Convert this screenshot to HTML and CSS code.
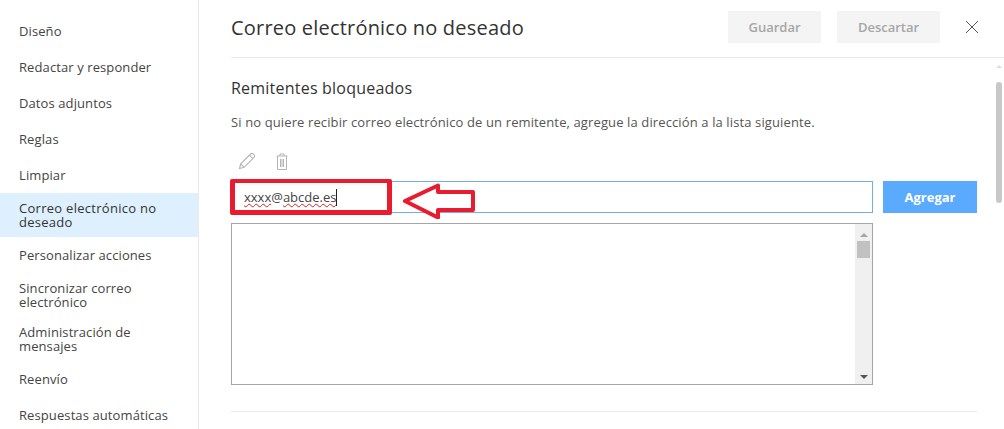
FILE: index.html
```html
<!DOCTYPE html>
<html lang="es">
<head>
<meta charset="utf-8">
<title>Correo electrónico no deseado</title>
<link rel="stylesheet" href="styles.css">
</head>
<body>
<div class="app">
  <nav class="side">
    <a class="item">Diseño</a>
    <a class="item">Redactar y responder</a>
    <a class="item">Datos adjuntos</a>
    <a class="item">Reglas</a>
    <a class="item">Limpiar</a>
    <a class="item two active">Correo electrónico no deseado</a>
    <a class="item">Personalizar acciones</a>
    <a class="item two">Sincronizar correo electrónico</a>
    <a class="item two">Administración de mensajes</a>
    <a class="item">Reenvío</a>
    <a class="item">Respuestas automáticas</a>
  </nav>
  <main class="main">
    <header class="head">
      <h1 class="title">Correo electrónico no deseado</h1>
      <button class="btn save">Guardar</button>
      <button class="btn discard">Descartar</button>
      <svg class="close" width="14" height="14" viewBox="0 0 14 14"><path d="M1 1l12 12M13 1L1 13" stroke="#555" stroke-width="1" fill="none"/></svg>
    </header>
    <div class="body">
      <div class="content">
        <h2 class="sub">Remitentes bloqueados</h2>
        <p class="desc">Si no quiere recibir correo electrónico de un remitente, agregue la dirección a la lista siguiente.</p>
        <div class="tools">
          <svg width="18" height="18" viewBox="0 0 18 18"><path d="M1.500 16.500l1.200-4.600L12.600 2c.8-.8 1.900-.8 2.600-.1l.9.9c.7.7.7 1.800-.1 2.600L6.100 15.300zM2.700 11.900l3.400 3.400M11.400 3.200l3.400 3.400" stroke="#b4b4b4" stroke-width="1.100" fill="none"/></svg>
          <svg width="12" height="17" viewBox="0 0 12 17"><path d="M.5 3h11M4 3V1h4v2M1.500 3v13.500h9V3M4.500 6v8M6 6v8M7.500 6v8" stroke="#b4b4b4" stroke-width="1" fill="none"/></svg>
        </div>
        <div class="add-row">
          <div class="input"><span class="typed"><span class="sp">xxxx</span>@<span class="sp">abcde.es</span></span><span class="caret"></span></div>
          <button class="add">Agregar</button>
        </div>
        <div class="list">
          <div class="list-bar">
            <span class="tri up"></span>
            <span class="thumb"></span>
            <span class="tri down"></span>
          </div>
        </div>
        <div class="rule"></div>
      </div>
      <div class="page-bar"><span class="page-up"></span><span class="page-thumb"></span></div>
    </div>
  </main>
</div>
<div class="mark"></div>
<svg class="arrow" width="74" height="36" viewBox="0 0 74 36"><path d="M3 18L36 2.500v6.500h35v18H36v7.500z" fill="#fff" stroke="#e81c2e" stroke-width="4" stroke-linejoin="round"/></svg>
</body>
</html>
```
FILE: styles.css
```css
html, body { margin: 0; height: 100%; overflow: hidden; background: #fff; }
body { font-family: "Open Sans", "Noto Sans", sans-serif; color: #333; position: relative; }
.app { display: flex; height: 429px; }
.side { width: 198px; flex: none; border-right: 1px solid #eaeaea; padding-top: 13px; box-sizing: content-box; }
.item { display: flex; align-items: center; height: 36px; padding: 0 20px 0 19px; font-size: 13px; line-height: 14px; color: #444; letter-spacing: .1px; }
.item.two { height: 44px; }
.item.active { background: #def0fd; color: #333; letter-spacing: .28px; }
.main { flex: 1; min-width: 0; display: flex; flex-direction: column; }
.head { height: 57px; margin-left: 32px; border-bottom: 1px solid #eaeaea; display: flex; align-items: center; flex: none; }
.title { margin: 0 auto 3px 0; font-size: 20px; font-weight: 400; color: #333; letter-spacing: .2px; }
.btn { height: 32px; border: 0; background: #f4f4f4; color: #a6a6a6; font: 600 13px "Open Sans", sans-serif; margin-bottom: 4px; padding: 0; }
.save { width: 93px; margin-right: 16px; }
.discard { width: 103px; margin-right: 25px; }
.close { margin-right: 25px; margin-bottom: 4px; }
.body { flex: 1; display: flex; min-height: 0; }
.content { width: 746px; margin-left: 32px; }
.sub { margin: 19px 0 0; font-size: 16px; line-height: 22px; font-weight: 500; color: #333; letter-spacing: .22px; }
.desc { margin: 14px 0 0; font-size: 13px; line-height: 18px; color: #555; letter-spacing: .12px; }
.tools { display: flex; gap: 20px; align-items: center; padding-left: 7px; margin-top: 20px; height: 20px; }
.add-row { display: flex; margin-top: 10px; gap: 10px; }
.input { width: 628px; height: 30px; border: 1px solid #71afe5; display: flex; align-items: center; padding-left: 12px; box-sizing: content-box; font-size: 13px; color: #444; }
.sp { text-decoration: underline wavy #d82020 1px; text-underline-offset: 1px; }
.caret { width: 1px; height: 17px; background: #222; }
.add { width: 94px; height: 32px; border: 0; background: #5aabff; color: #fff; font: 700 13px "Open Sans", sans-serif; padding: 0; }
.list { width: 640px; height: 160px; border: 1px solid #a6a6a6; margin-top: 10px; display: flex; justify-content: flex-end; }
.list-bar { width: 17px; background: #f0f0f0; display: flex; flex-direction: column; align-items: center; padding: 9px 0 5px; box-sizing: border-box; }
.tri { width: 0; height: 0; border-left: 4px solid transparent; border-right: 4px solid transparent; }
.tri.up { border-bottom: 4px solid #a3a3a3; }
.tri.down { border-top: 4px solid #555; margin-top: auto; }
.thumb { width: 13px; height: 17px; background: #c1c1c1; margin-top: 4px; }
.rule { height: 1px; background: #eaeaea; margin-top: 26px; }
.page-bar { width: 8px; margin-left: 19px; position: relative; }
.page-up { display: block; width: 0; height: 0; border-left: 3px solid transparent; border-right: 3px solid transparent; border-bottom: 3px solid #ddd; margin: 7px 0 0 0; }
.page-thumb { display: block; width: 6px; height: 121px; background: #c8c8c8; border-radius: 3px; margin-top: 14px; }
.mark { position: absolute; left: 230px; top: 179px; width: 152px; height: 27px; border: solid #e81c2e; border-width: 4px 5px 5px; border-radius: 2px; }
.arrow { position: absolute; left: 402px; top: 183px; }
```
